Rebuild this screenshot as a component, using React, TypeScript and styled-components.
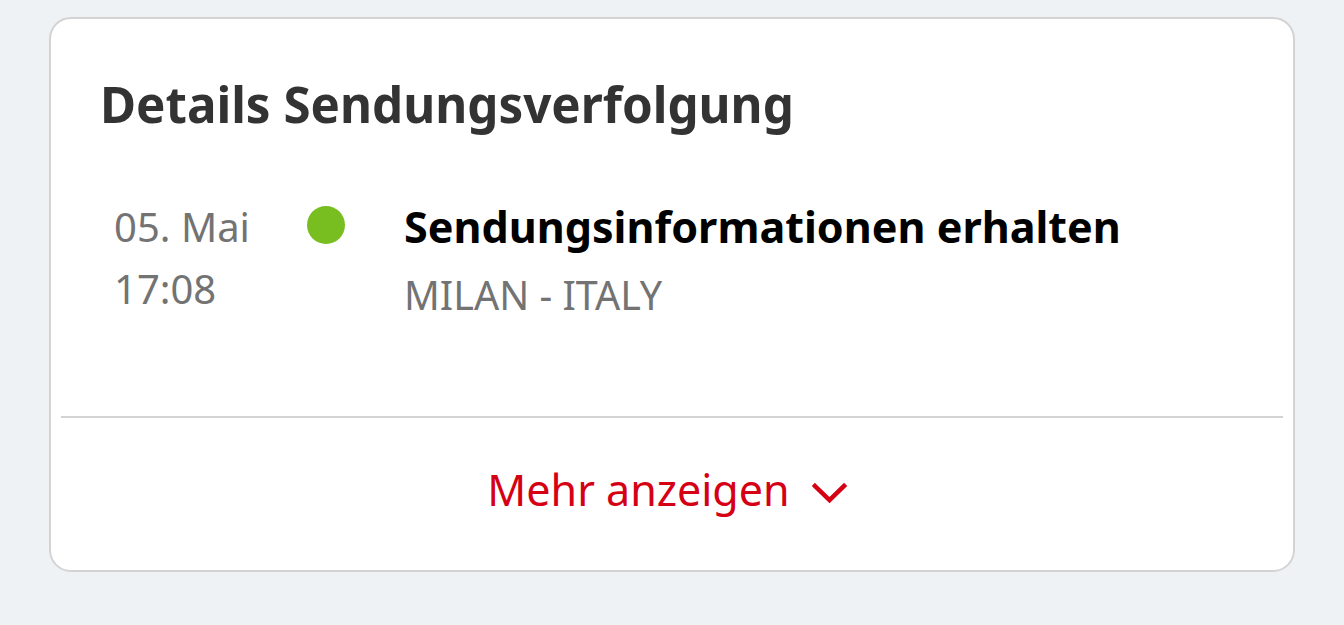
import React from "react";
import styled, { createGlobalStyle } from "styled-components";

const GlobalStyle = createGlobalStyle`
  html, body {
    margin: 0;
    padding: 0;
    background: #eef2f5;
    font-family: "Noto Sans", "Open Sans", sans-serif;
  }
`;

const Page = styled.div`
  padding: 17px 49px 0 49px;
  box-sizing: border-box;
  width: 1344px;
  height: 625px;
`;

const Card = styled.section`
  box-sizing: border-box;
  width: 1246px;
  height: 555px;
  background: #ffffff;
  border: 2px solid #d3d3d3;
  border-radius: 22px;
  padding: 0 10px;
  display: flex;
  flex-direction: column;
`;

const Title = styled.h2`
  margin: 0;
  padding: 55px 0 0 39px;
  font-size: 49.3px;
  line-height: 60px;
  font-weight: 700;
  color: #333333;
`;

const Event = styled.div`
  display: grid;
  grid-template-columns: 193px 97px 1fr;
  align-items: start;
  padding: 62px 0 0 53px;
  flex: 1;
`;

const DateCol = styled.div`
  display: flex;
  flex-direction: column;
  font-size: 40px;
  line-height: 62px;
  color: #737373;
`;

const DotCol = styled.div`
  display: flex;
  padding-top: 10px;
`;

const Dot = styled.span`
  width: 38px;
  height: 38px;
  border-radius: 50%;
  background: #78be20;
`;

const Info = styled.div`
  display: flex;
  flex-direction: column;
  padding-top: 3px;
`;

const EventTitle = styled.div`
  font-size: 43.1px;
  line-height: 56px;
  font-weight: 700;
  color: #000000;
`;

const Location = styled.div`
  font-size: 39.5px;
  line-height: 56px;
  color: #737373;
  margin-top: 12px;
`;

const Divider = styled.hr`
  margin: 0;
  border: none;
  height: 2px;
  background: #d3d3d3;
`;

const Footer = styled.div`
  box-sizing: border-box;
  height: 152px;
  padding: 0 10px 8px 0;
  display: flex;
  align-items: center;
  justify-content: center;
`;

const MoreButton = styled.button`
  display: flex;
  align-items: center;
  gap: 22px;
  background: none;
  border: none;
  padding: 0;
  font-family: inherit;
  font-size: 43px;
  line-height: 60px;
  color: #d50014;
  cursor: pointer;
`;

const ChevronIcon = styled.svg`
  display: block;
  margin-top: 6px;
`;

const Chevron = () => (
  <ChevronIcon width="35" height="22" viewBox="0 0 35 22" fill="none">
    <path d="M3 4 L17.5 18 L32 4" stroke="#d50014" strokeWidth="4.5" strokeLinecap="square" />
  </ChevronIcon>
);

export default function App() {
  return (
    <>
      <GlobalStyle />
      <Page>
        <Card>
          <Title>Details Sendungsverfolgung</Title>
          <Event>
            <DateCol>
              <span>05. Mai</span>
              <span>17:08</span>
            </DateCol>
            <DotCol>
              <Dot />
            </DotCol>
            <Info>
              <EventTitle>Sendungsinformationen erhalten</EventTitle>
              <Location>MILAN - ITALY</Location>
            </Info>
          </Event>
          <Divider />
          <Footer>
            <MoreButton>
              Mehr anzeigen
              <Chevron />
            </MoreButton>
          </Footer>
        </Card>
      </Page>
    </>
  );
}
